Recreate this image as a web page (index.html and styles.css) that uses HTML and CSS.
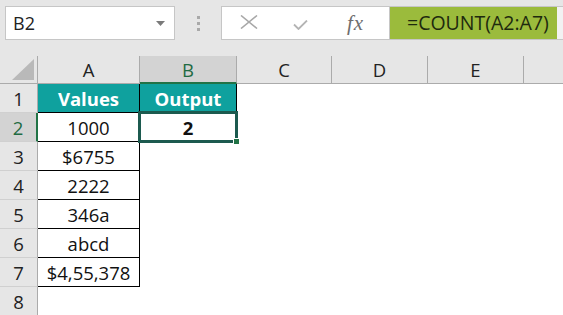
FILE: index.html
```html
<!DOCTYPE html>
<html lang="en">
<head>
<meta charset="UTF-8">
<title>COUNT</title>
<link rel="stylesheet" href="styles.css">
</head>
<body>
  <!-- formula bar -->
  <div class="toolbar">
    <div class="namebox">
      <span>B2</span>
      <svg class="caret" width="9" height="5" viewBox="0 0 9 5"><path d="M0 0h9L4.5 5z" fill="#7a7a7a"/></svg>
    </div>
    <div class="grip"><i></i><i></i><i></i></div>
    <div class="fbar">
      <div class="fbtns">
        <svg class="ico-x" width="18" height="14" viewBox="0 0 18 14"><path d="M1 0.5l16 13M17 0.5L1 13.5" stroke="#a8a8a8" stroke-width="1.6" fill="none"/></svg>
        <svg class="ico-ok" width="15" height="10" viewBox="0 0 15 10"><path d="M1 4.5l4.5 4.5L14 0.5" stroke="#b4b4b4" stroke-width="1.8" fill="none"/></svg>
        <span class="fx">fx</span>
      </div>
      <div class="finput"><span class="hl">=COUNT(A2:A7)</span></div>
    </div>
  </div>

  <!-- sheet -->
  <div class="sheet">
    <div class="corner"><svg width="22" height="21" viewBox="0 0 22 21"><path d="M22 0v21H0z" fill="#b9b9b9"/></svg></div>
    <div class="ch">A</div>
    <div class="ch sel">B</div>
    <div class="ch">C</div>
    <div class="ch">D</div>
    <div class="ch">E</div>
    <div class="ch last"></div>

    <div class="rh">1</div>
    <div class="c bx head">Values</div>
    <div class="c bx head">Output</div>
    <div class="c"></div><div class="c"></div><div class="c"></div><div class="c"></div>

    <div class="rh sel">2</div>
    <div class="c bx">1000</div>
    <div class="c bx active"><b>2</b></div>
    <div class="c"></div><div class="c"></div><div class="c"></div><div class="c"></div>

    <div class="rh">3</div>
    <div class="c bx">$6755</div>
    <div class="c"></div><div class="c"></div><div class="c"></div><div class="c"></div><div class="c"></div>

    <div class="rh">4</div>
    <div class="c bx">2222</div>
    <div class="c"></div><div class="c"></div><div class="c"></div><div class="c"></div><div class="c"></div>

    <div class="rh">5</div>
    <div class="c bx">346a</div>
    <div class="c"></div><div class="c"></div><div class="c"></div><div class="c"></div><div class="c"></div>

    <div class="rh">6</div>
    <div class="c bx">abcd</div>
    <div class="c"></div><div class="c"></div><div class="c"></div><div class="c"></div><div class="c"></div>

    <div class="rh">7</div>
    <div class="c bx">$4,55,378</div>
    <div class="c"></div><div class="c"></div><div class="c"></div><div class="c"></div><div class="c"></div>

    <div class="rh">8</div>
    <div class="c"></div><div class="c"></div><div class="c"></div><div class="c"></div><div class="c"></div><div class="c"></div>
  </div>
</body>
</html>
```

FILE: styles.css
```css
body {
  margin: 0;
  padding: 0;
  width: 563px;
  height: 315px;
  overflow: hidden;
  background: #fff;
  font-family: 'Open Sans', 'Lato', sans-serif;
  color: #111;
}

/* formula bar */
.toolbar {
  display: flex;
  align-items: flex-start;
  height: 56px;
  box-sizing: border-box;
  padding: 6px 0 0 5px;
  background: #e6e6e6;
}

.namebox {
  flex: none;
  width: 170px;
  height: 34px;
  box-sizing: border-box;
  border: 1px solid #c6c6c6;
  background: #fff;
  display: flex;
  align-items: center;
  justify-content: space-between;
  padding: 0 9px 0 7px;
  font-size: 18px;
  color: #222;
}

.namebox .caret {
  margin-top: 1px;
}

.grip {
  flex: none;
  width: 46px;
  height: 34px;
  display: flex;
  flex-direction: column;
  align-items: center;
  justify-content: center;
  gap: 3px;
}

.grip i {
  display: block;
  width: 3px;
  height: 3px;
  background: #a9a9a9;
}

.fbar {
  flex: 1;
  min-width: 0;
  height: 34px;
  display: flex;
  box-sizing: border-box;
  border: 1px solid #c6c6c6;
  border-right: none;
  background: #fff;
}

.fbtns {
  flex: none;
  width: 168px;
  box-sizing: border-box;
  display: flex;
  align-items: center;
  padding-left: 18px;
  border-right: 1px solid #c6c6c6;
}

.ico-x {
  margin-top: -2px;
}

.ico-ok {
  margin-left: 35px;
  margin-top: 4px;
}

.fbtns .fx {
  margin-left: 39px;
  font-family: 'Liberation Serif', serif;
  font-style: italic;
  font-size: 21px;
  color: #6e6e6e;
  letter-spacing: 1px;
}

.finput {
  flex: 1;
  display: flex;
  background: #f2f2f2;
}

.finput .hl {
  flex: none;
  width: 167px;
  box-sizing: border-box;
  background: #9bbb3c;
  padding-left: 17px;
  font-size: 19.5px;
  line-height: 32px;
  color: #1e2a0e;
  white-space: nowrap;
  overflow: hidden;
}

/* sheet */
.sheet {
  display: grid;
  grid-template-columns: 38px 102px 97px 95px 96px 96px 1fr;
  grid-template-rows: 28px;
  grid-auto-rows: 29px;
  font-size: 18.5px;
}

.corner {
  background: #e6e6e6;
  border-right: 1px solid #ababab;
  border-bottom: 1px solid #ababab;
  display: flex;
  align-items: flex-end;
  justify-content: flex-end;
  padding: 0 3px 3px 0;
}

.ch {
  background: #e6e6e6;
  border-right: 1px solid #ababab;
  border-bottom: 1px solid #ababab;
  display: flex;
  align-items: center;
  justify-content: center;
  color: #222;
}

.ch.last {
  border-right: none;
}

.ch.sel {
  background: #d3d3d3;
  color: #1f6b42;
  border-bottom: 2px solid #217346;
}

.rh {
  background: #e6e6e6;
  border-right: 1px solid #ababab;
  border-bottom: 1px solid #d0d0d0;
  display: flex;
  align-items: center;
  justify-content: center;
  color: #222;
}

.rh.sel {
  background: #d3d3d3;
  color: #1f6b42;
  border-right: 2px solid #217346;
}

.c {
  display: flex;
  align-items: center;
  justify-content: center;
  white-space: nowrap;
}

.bx {
  border-right: 1px solid #000;
  border-bottom: 1px solid #000;
}

.head {
  background: #0fa19e;
  color: #fff;
  font-weight: 700;
}

.active {
  position: relative;
}

.active b {
  font-weight: 700;
}

/* selection frame over B2 */
.active::after {
  content: "";
  position: absolute;
  top: -2px;
  left: -2px;
  right: -2px;
  bottom: -2px;
  border: 3px solid #1c5a4f;
}

.active::before {
  content: "";
  position: absolute;
  right: -4px;
  bottom: -4px;
  width: 5px;
  height: 5px;
  background: #217346;
  border: 1px solid #fff;
  z-index: 1;
}
```
